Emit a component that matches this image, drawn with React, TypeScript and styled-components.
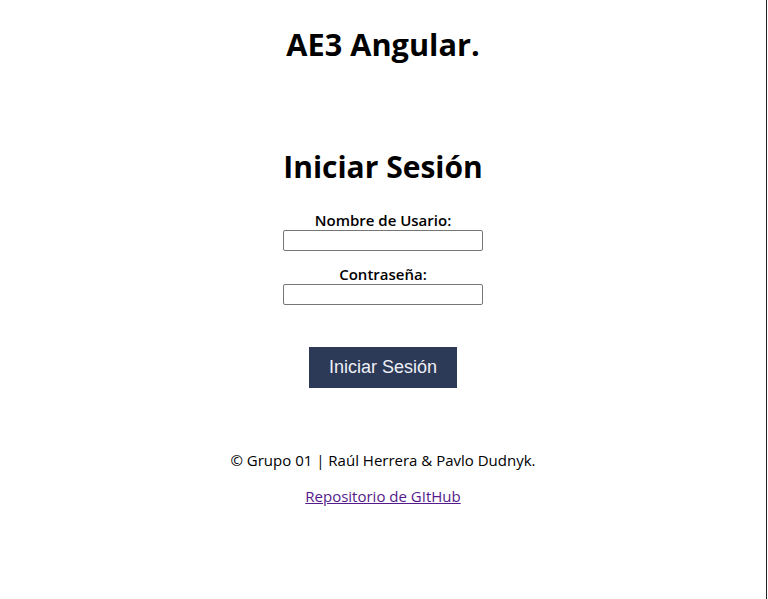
import React from "react";
import styled, { createGlobalStyle } from "styled-components";

const Global = createGlobalStyle`
  html, body { margin: 0; padding: 0; background: #fff; }
  body { font-family: "Open Sans", "Noto Sans", sans-serif; color: #000; }
`;

const Frame = styled.div`
  display: flex;
  width: 768px;
  min-height: 599px;
`;

const Main = styled.div`
  width: 766px;
  min-height: 599px;
  border-right: 1px solid #222;
  display: flex;
  flex-direction: column;
  align-items: center;
`;

const Title = styled.h1`
  margin: 24px 0 0;
  font-size: 30.7px;
  line-height: 40px;
  font-weight: 700;
`;

const Heading = styled.h2`
  margin: 83px 0 0;
  font-size: 30px;
  line-height: 40px;
  font-weight: 700;
`;

const Form = styled.form`
  display: flex;
  flex-direction: column;
  align-items: center;
  margin-top: 23px;
`;

const Field = styled.div<{ $gap?: number }>`
  display: flex;
  flex-direction: column;
  align-items: center;
  margin-top: ${(p) => p.$gap ?? 0}px;
`;

const Label = styled.label`
  font-size: 15px;
  line-height: 20px;
  font-weight: 600;
`;

const Input = styled.input`
  box-sizing: border-box;
  width: 200px;
  height: 21px;
  margin: 0;
  border: 1px solid #767676;
  border-radius: 2px;
  padding: 1px 2px;
  background: #fff;
`;

const Button = styled.button`
  margin-top: 42px;
  width: 148px;
  height: 41px;
  border: none;
  background: #2c3a57;
  color: #eef0f6;
  font-family: "Liberation Sans", Arial, sans-serif;
  font-size: 18px;
  cursor: pointer;
`;

const Footer = styled.footer`
  margin-top: 62px;
  display: flex;
  flex-direction: column;
  align-items: center;
  gap: 16px;
  font-size: 15px;
  line-height: 20px;
`;

const Link = styled.a`
  color: #551a8b;
  text-decoration: underline;
`;

export default function App() {
  return (
    <>
      <Global />
      <Frame>
        <Main>
          <Title>AE3 Angular.</Title>
          <Heading>Iniciar Sesión</Heading>
          <Form onSubmit={(e) => e.preventDefault()}>
            <Field>
              <Label htmlFor="user">Nombre de Usario:</Label>
              <Input id="user" type="text" />
            </Field>
            <Field $gap={13}>
              <Label htmlFor="pass">Contraseña:</Label>
              <Input id="pass" type="password" />
            </Field>
            <Button type="submit">Iniciar Sesión</Button>
          </Form>
          <Footer>
            <span>© Grupo 01 | Raúl Herrera &amp; Pavlo Dudnyk.</span>
            <Link href="#">Repositorio de GItHub</Link>
          </Footer>
        </Main>
      </Frame>
    </>
  );
}
